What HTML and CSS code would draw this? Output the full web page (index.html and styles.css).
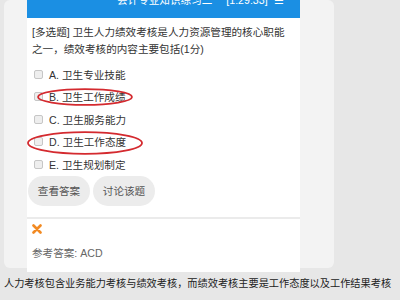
FILE: index.html
```html
<!DOCTYPE html>
<html lang="zh-CN">

<head>
    <meta charset="UTF-8">
    <meta name="viewport" content="width=device-width, initial-scale=1.0">
    <title>练习</title>
    <link rel="stylesheet" href="styles.css">
</head>

<body>
    <div class="page">
        <div class="card">
            <div class="phone">
                <div class="topbar">
                    <span class="topbar-title">会计专业知识练习二</span>
                    <span class="topbar-time">[1:29:33]</span>
                    <span class="topbar-menu">☰</span>
                </div>
                <p class="question">[多选题] 卫生人力绩效考核是人力资源管理的核心职能之一，绩效考核的内容主要包括(1分)</p>
                <ul class="options">
                    <li class="option"><span class="check"></span>A. 卫生专业技能</li>
                    <li class="option"><span class="check"></span>B. 卫生工作成绩
                        <svg class="mark mark-b" width="96" height="18" viewBox="0 0 96 18"><ellipse cx="48" cy="9" rx="47" ry="7.8" fill="none" stroke="#d42a2f" stroke-width="1.8"/></svg>
                    </li>
                    <li class="option"><span class="check"></span>C. 卫生服务能力</li>
                    <li class="option"><span class="check"></span>D. 卫生工作态度
                        <svg class="mark mark-d" width="116" height="24" viewBox="0 0 116 24"><ellipse cx="58" cy="12" rx="57" ry="10.8" fill="none" stroke="#d42a2f" stroke-width="1.8"/></svg>
                    </li>
                    <li class="option"><span class="check"></span>E. 卫生规划制定</li>
                </ul>
                <div class="actions">
                    <span class="btn">查看答案</span>
                    <span class="btn">讨论该题</span>
                </div>
                <div class="result">
                    <svg class="wrong" width="10" height="10" viewBox="0 0 10 10"><path d="M1.5 1.5 L8.5 8.5 M8.5 1.5 L1.5 8.5" stroke="#f28a22" stroke-width="2.6" stroke-linecap="round"/></svg>
                    <p class="answer">参考答案: ACD</p>
                </div>
            </div>
        </div>
        <p class="caption">人力考核包含业务能力考核与绩效考核，而绩效考核主要是工作态度以及工作结果考核</p>
    </div>
</body>

</html>
```

FILE: styles.css
```css
* {
    margin: 0;
    padding: 0;
}

body {
    background-color: #e7e7e7;
    font-family: "Liberation Sans", "Noto Sans CJK SC", sans-serif;
    font-size: 10.6px;
}

.page {
    padding: 4px 4px 0;
}

.card {
    width: 330px;
    height: 268px;
    box-sizing: border-box;
    padding-left: 23px;
    background-color: #f3f3f3;
    border-radius: 6px;
}

.phone {
    width: 273px;
    height: 272px;
    margin-top: -4px;
    background-color: #fff;
}

.topbar {
    height: 18px;
    display: flex;
    gap: 14px;
    padding-left: 90px;
    overflow: hidden;
    background-color: #1b8fe3;
    color: #fff;
}

.topbar span {
    line-height: 12px;
    margin-top: -6px;
}

.topbar .topbar-menu {
    margin-left: -8px;
}

.question {
    padding: 6px 8px 0 5px;
    line-height: 17px;
    color: #333;
}

.options {
    list-style: none;
    margin-top: 5px;
}

.option {
    position: relative;
    height: 22.5px;
    display: flex;
    align-items: center;
    padding-left: 7px;
    color: #333;
}

.check {
    width: 7px;
    height: 7px;
    margin-right: 6px;
    border: 1px solid #c6c6c6;
    border-radius: 2px;
    background-color: #eee;
}

.mark {
    position: absolute;
}

.mark-b {
    left: 10px;
    top: 2.5px;
}

.mark-d {
    left: 0;
    top: 0.5px;
}

.actions {
    display: flex;
    gap: 3px;
    padding-left: 1px;
}

.btn {
    width: 62px;
    height: 30px;
    display: flex;
    align-items: center;
    justify-content: center;
    border-radius: 15px;
    background-color: #ececec;
    color: #555;
}

.result {
    margin-top: 11px;
    padding: 5px 5px 0;
    border-top: 2px solid #ebebeb;
}

.wrong {
    display: block;
}

.answer {
    margin-top: 12px;
    line-height: 15px;
    color: #666;
}

.caption {
    margin-top: 8px;
    line-height: 15px;
    font-size: 10.2px;
    white-space: nowrap;
    color: #222;
}
```
